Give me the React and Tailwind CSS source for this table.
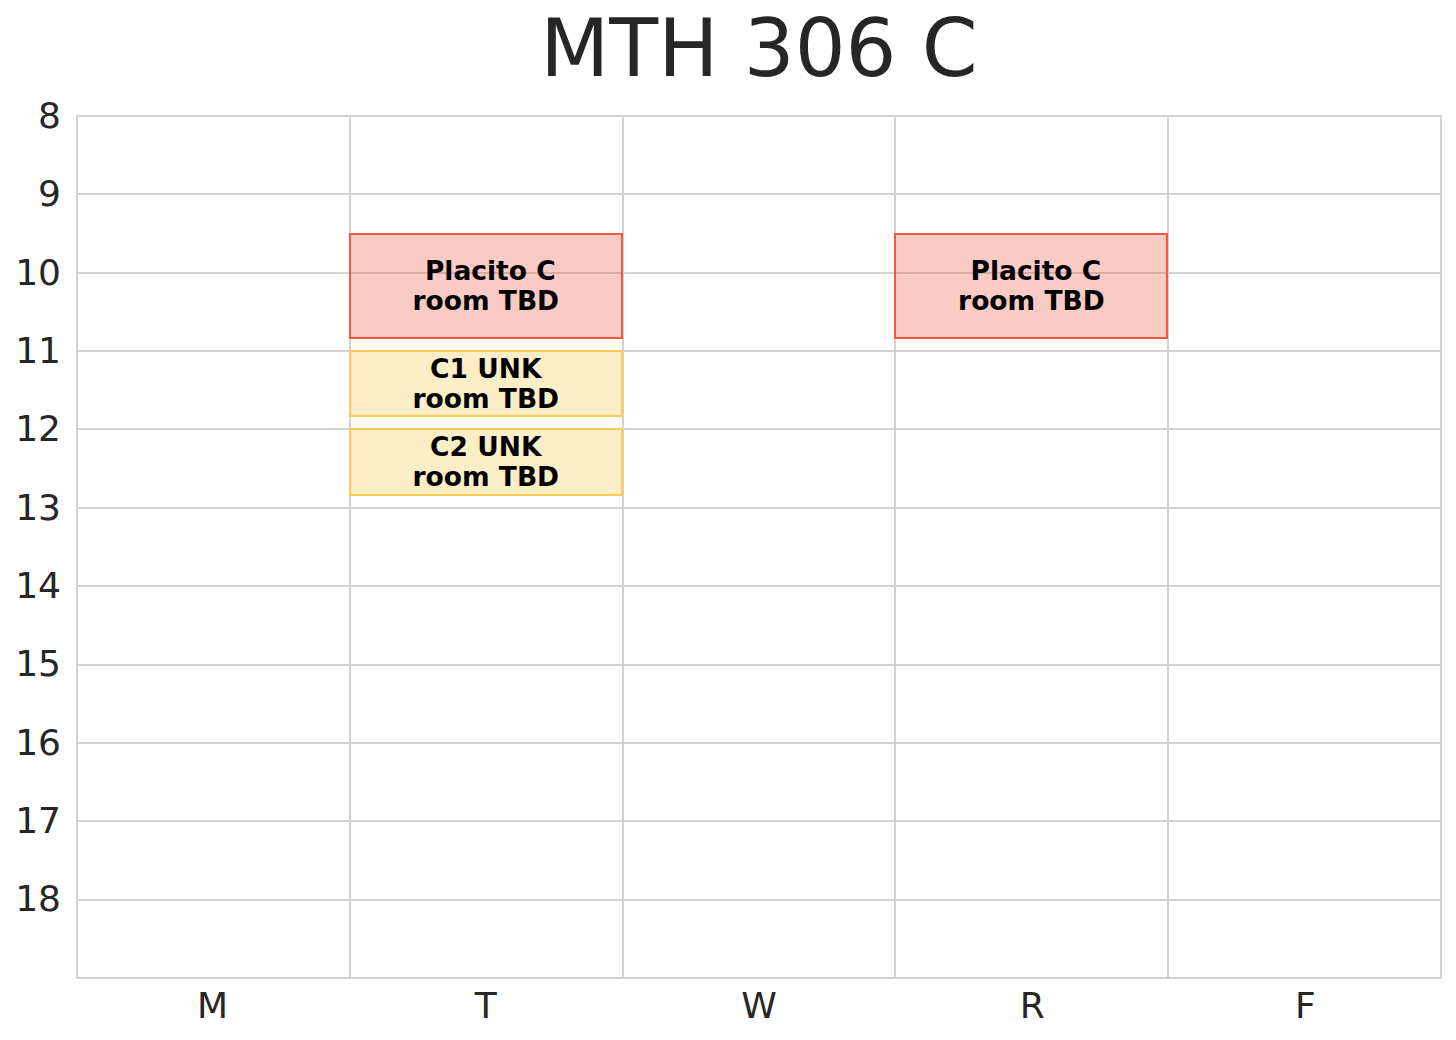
const HOURS = [8, 9, 10, 11, 12, 13, 14, 15, 16, 17, 18];
const DAYS = ["M", "T", "W", "R", "F"];
const HOUR_PX = 862 / 11;

const events = [
  { day: 1, start: 9.5, end: 10.833, lines: ["Placito C", "room TBD"], kind: "lec" },
  { day: 3, start: 9.5, end: 10.833, lines: ["Placito C", "room TBD"], kind: "lec" },
  { day: 1, start: 11, end: 11.833, lines: ["C1 UNK", "room TBD"], kind: "unk" },
  { day: 1, start: 12, end: 12.833, lines: ["C2 UNK", "room TBD"], kind: "unk" },
];

const EventBox = ({ ev }) => {
  const isLec = ev.kind === "lec";
  return (
    <div
      className={
        "absolute flex flex-col items-center justify-center text-center font-bold text-[26.5px] leading-[30px] text-black border-2 " +
        (isLec ? "bg-[rgba(240,80,60,0.3)] border-[#f25a3f]" : "bg-[rgba(252,200,74,0.3)] border-[#fcca52]")
      }
      style={{
        left: ev.day * 272.8,
        width: 274,
        top: (ev.start - 8) * HOUR_PX,
        height: (ev.end - ev.start) * HOUR_PX + 2,
      }}
    >
      <div className={isLec ? "pl-[9px]" : ""}>{ev.lines[0]}</div>
      <div>{ev.lines[1]}</div>
    </div>
  );
};

export default function App() {
  return (
    <div className="w-[1456px] h-[1040px] bg-white font-['DejaVu_Sans',sans-serif] text-[#262626] overflow-hidden">
      {/* titre */}
      <div className="ml-[77px] w-[1364px]">
        <h1 className="pt-[9px] text-center text-[80px] leading-[80px]">MTH 306 C</h1>
      </div>

      <div className="mt-[26px] flex">
        {/* heures */}
        <div className="w-[76px] pt-px flex flex-col">
          {HOURS.map((h) => (
            <div key={h} className="h-[78.33px] pr-[15px] text-right text-[36px] leading-[36px]">
              <span className="block -translate-y-1/2">{h}</span>
            </div>
          ))}
        </div>

        <div className="w-[1366px]">
          <div className="relative h-[864px] bg-[#d2d2d2] p-[2px]">
            <div className="grid grid-cols-5 grid-rows-11 gap-[2px] h-full">
              {Array.from({ length: 55 }).map((_, i) => (
                <div key={i} className="bg-white" />
              ))}
            </div>
            {events.map((ev, i) => (
              <EventBox key={i} ev={ev} />
            ))}
          </div>

          {/* jours */}
          <div className="mt-[9px] grid grid-cols-5 text-center text-[36px] leading-[36px]">
            {DAYS.map((d) => (
              <div key={d}>{d}</div>
            ))}
          </div>
        </div>
      </div>
    </div>
  );
}
